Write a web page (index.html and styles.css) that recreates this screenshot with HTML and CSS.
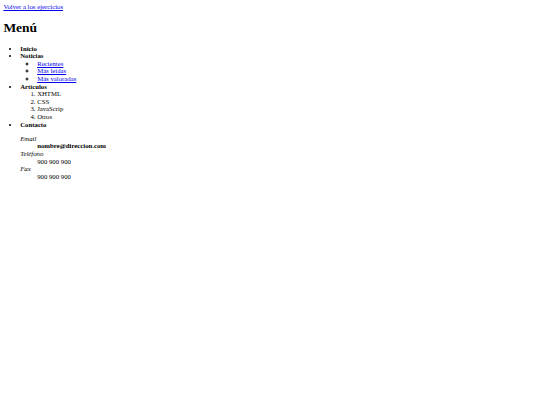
FILE: index.html
```html
<!DOCTYPE html>
<html lang="es">
<head>
<meta charset="utf-8">
<title>Menú</title>
<link rel="stylesheet" href="styles.css">
</head>
<body class="page">
<a class="back" href="#">Volver a los ejercicios</a>
<h1 class="title">Menú</h1>
<ul class="menu">
  <li><strong>Inicio</strong></li>
  <li><strong>Noticias</strong>
    <ul class="sub">
      <li><a href="#">Recientes</a></li>
      <li><a href="#">Más leídas</a></li>
      <li><a href="#">Más valoradas</a></li>
    </ul>
  </li>
  <li><strong>Artículos</strong>
    <ol class="sub">
      <li>XHTML</li>
      <li>CSS</li>
      <li>JavaScrip</li>
      <li>Otros</li>
    </ol>
  </li>
  <li><strong>Contacto</strong>
    <dl class="contact">
      <dt><em>Email</em></dt>
      <dd><strong>nombre@direccion.com</strong></dd>
      <dt><em>Teléfono</em></dt>
      <dd>900 900 900</dd>
      <dt><em>Fax</em></dt>
      <dd>900 900 900</dd>
    </dl>
  </li>
</ul>
</body>
</html>
```

FILE: styles.css
```css
.page {
  margin: 3.375px;
  font-family: "Liberation Serif", "Times New Roman", serif;
  font-size: 6.75px;
  line-height: 7.6px;
  color: #000;
  background: #fff;
}
.page a {
  color: #0000ee;
}
.title {
  font-size: 13.5px;
  line-height: 15.5px;
  font-weight: bold;
  margin: 9.05px 0;
}
.menu {
  margin: 6.75px 0;
  padding-left: 16.875px;
  list-style-type: disc;
}
.menu .sub {
  margin: 0;
  padding-left: 16.875px;
}
.menu ul.sub {
  list-style-type: circle;
}
.menu ol.sub {
  list-style-type: decimal;
}
.contact {
  margin: 6.75px 0;
}
.contact dd {
  margin-left: 16.875px;
}
```
